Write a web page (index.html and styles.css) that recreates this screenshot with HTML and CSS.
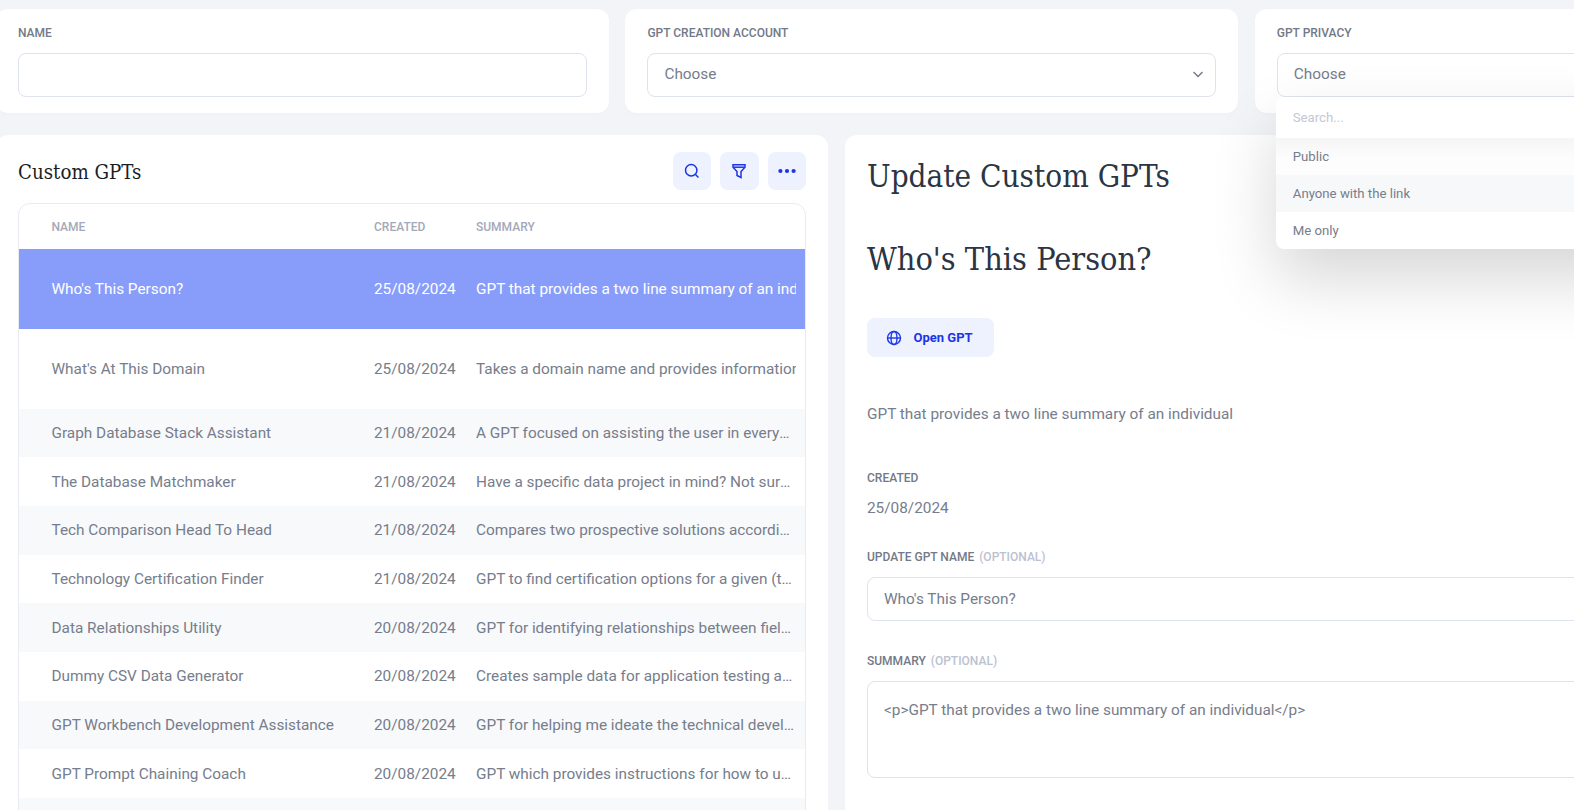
FILE: index.html
```html
<!DOCTYPE html>
<html>
<head>
  <title>Custom GPTs</title>
  <link rel="stylesheet" href="styles.css">
</head>
<body>
  <div class="page">
    <div class="top-row">
      <div class="card field-card">
        <label class="field-label">Name</label>
        <input class="text-input" type="text">
      </div>
      <div class="card field-card">
        <label class="field-label">GPT creation account</label>
        <div class="select-box">
          <span>Choose</span>
          <svg class="chevron" viewBox="0 0 12 12"><path d="M1.5 4l4.5 4.5L10.500 4"/></svg>
        </div>
      </div>
      <div class="card field-card field-card-open">
        <label class="field-label">GPT privacy</label>
        <div class="select-box select-open">
          <span>Choose</span>
          <div class="dropdown">
            <div class="dropdown-search">Search...</div>
            <div class="dropdown-item dropdown-item-first">Public</div>
            <div class="dropdown-item dropdown-item-hover">Anyone with the link</div>
            <div class="dropdown-item">Me only</div>
          </div>
        </div>
      </div>
    </div>

    <div class="main-row">
      <div class="card list-card">
        <div class="list-header">
          <h3 class="list-title">Custom GPTs</h3>
          <div class="list-actions">
            <button class="icon-button">
              <svg viewBox="0 0 16 16"><circle cx="7.200" cy="7.200" r="5.700"/><path d="M11.500 11.500l3 3"/></svg>
            </button>
            <button class="icon-button">
              <svg viewBox="0 0 16 16"><path d="M2 1.800h12v2.400l-4 4.300v6l-4-2V8.500L2 4.200z"/><path d="M2.500 4.200h11"/></svg>
            </button>
            <button class="icon-button">
              <svg viewBox="0 0 16 16"><circle class="dot" cx="1.400" cy="8" r="2.100"/><circle class="dot" cx="8" cy="8" r="2.100"/><circle class="dot" cx="14.600" cy="8" r="2.100"/></svg>
            </button>
          </div>
        </div>
        <div class="table-wrap">
          <table class="gpt-table">
            <thead>
              <tr>
                <th class="col-name">Name</th>
                <th class="col-created">Created</th>
                <th class="col-summary">Summary</th>
              </tr>
            </thead>
            <tbody>
              <tr class="row-selected row-tall">
                <td class="col-name">Who's This Person?</td>
                <td class="col-created">25/08/2024</td>
                <td class="col-summary"><div class="clip">GPT that provides a two line summary of an individual</div></td>
              </tr>
              <tr class="row-tall">
                <td class="col-name">What's At This Domain</td>
                <td class="col-created">25/08/2024</td>
                <td class="col-summary"><div class="clip">Takes a domain name and provides information about it</div></td>
              </tr>
              <tr class="row-striped">
                <td class="col-name">Graph Database Stack Assistant</td>
                <td class="col-created">21/08/2024</td>
                <td class="col-summary"><div class="ellipsis">A GPT focused on assisting the user in everyday graph database work</div></td>
              </tr>
              <tr>
                <td class="col-name">The Database Matchmaker</td>
                <td class="col-created">21/08/2024</td>
                <td class="col-summary"><div class="ellipsis">Have a specific data project in mind? Not sure which database to use</div></td>
              </tr>
              <tr class="row-striped">
                <td class="col-name">Tech Comparison Head To Head</td>
                <td class="col-created">21/08/2024</td>
                <td class="col-summary"><div class="ellipsis">Compares two prospective solutions according to your requirements</div></td>
              </tr>
              <tr>
                <td class="col-name">Technology Certification Finder</td>
                <td class="col-created">21/08/2024</td>
                <td class="col-summary"><div class="ellipsis">GPT to find certification options for a given (technology or skill)</div></td>
              </tr>
              <tr class="row-striped">
                <td class="col-name">Data Relationships Utility</td>
                <td class="col-created">20/08/2024</td>
                <td class="col-summary"><div class="ellipsis">GPT for identifying relationships between fields in a dataset</div></td>
              </tr>
              <tr>
                <td class="col-name">Dummy CSV Data Generator</td>
                <td class="col-created">20/08/2024</td>
                <td class="col-summary"><div class="ellipsis">Creates sample data for application testing and development work</div></td>
              </tr>
              <tr class="row-striped">
                <td class="col-name">GPT Workbench Development Assistance</td>
                <td class="col-created">20/08/2024</td>
                <td class="col-summary"><div class="ellipsis">GPT for helping me ideate the technical development of a workbench</div></td>
              </tr>
              <tr>
                <td class="col-name">GPT Prompt Chaining Coach</td>
                <td class="col-created">20/08/2024</td>
                <td class="col-summary"><div class="ellipsis">GPT which provides instructions for how to use prompt chaining</div></td>
              </tr>
              <tr class="row-striped">
                <td class="col-name"></td>
                <td class="col-created"></td>
                <td class="col-summary"></td>
              </tr>
            </tbody>
          </table>
        </div>
      </div>

      <div class="card detail-card">
        <h1 class="detail-title">Update Custom GPTs</h1>
        <h2 class="detail-name">Who's This Person?</h2>
        <button class="open-button">
          <svg viewBox="0 0 16 16"><circle cx="8" cy="8" r="6.500"/><ellipse cx="8" cy="8" rx="3" ry="6.500"/><path d="M1.500 8h13"/></svg>
          <span>Open GPT</span>
        </button>
        <p class="detail-summary">GPT that provides a two line summary of an individual</p>
        <label class="field-label created-label">Created</label>
        <div class="created-value">25/08/2024</div>
        <label class="field-label update-label">Update GPT name <span class="optional">(optional)</span></label>
        <input class="text-input" type="text" value="Who's This Person?">
        <label class="field-label summary-label">Summary <span class="optional">(optional)</span></label>
        <textarea class="text-area">&lt;p&gt;GPT that provides a two line summary of an individual&lt;/p&gt;</textarea>
      </div>
    </div>
  </div>
</body>
</html>
```

FILE: styles.css
```css
/* page is scrolled sideways in the screenshot, so it runs past both edges */
html, body {
  height: 810px;
  overflow: hidden;
}
body {
  margin: 0;
  background-color: #f3f4f8;
  font-family: Roboto, sans-serif;
  color: #767d8c;
}
.page {
  width: 1900px;
  margin-left: -4px;
  padding-top: 9px;
}
.top-row {
  display: grid;
  grid-template-columns: repeat(3, 613px);
  gap: 16.400px;
}
.main-row {
  display: grid;
  grid-template-columns: 832px 1000px;
  gap: 17px;
  margin-top: 22px;
}
.card {
  background-color: #fff;
  border-radius: 12px;
  box-shadow: 0 3px 4px rgba(0, 0, 0, 0.01);
}
.field-card {
  height: 104px;
  padding: 0 22px;
  box-sizing: border-box;
}
.field-card-open {
  position: relative;
  z-index: 2;
}
.field-label {
  display: block;
  font-size: 12px;
  font-weight: 500;
  line-height: 14px;
  text-transform: uppercase;
  color: #727987;
}
.field-card .field-label {
  padding-top: 17px;
  margin-bottom: 13px;
}
.text-input, .select-box, .text-area {
  display: block;
  width: 100%;
  box-sizing: border-box;
  border: 1px solid #dfe2ef;
  border-radius: 8px;
  background-color: #fff;
  font-family: Roboto, sans-serif;
  font-size: 15.350px;
  color: #767d8c;
  padding: 0 16px;
  outline: none;
}
.text-input {
  height: 44px;
}
.select-box {
  height: 44px;
  display: flex;
  align-items: center;
  justify-content: space-between;
  padding-bottom: 2px;
  position: relative;
}
.chevron {
  width: 12px;
  height: 12px;
  margin-right: -5px;
  fill: none;
  stroke: #6d7588;
  stroke-width: 1.300;
}
.dropdown {
  position: absolute;
  top: 43px;
  left: -2px;
  right: -1px;
  background-color: #fff;
  border-radius: 8px;
  box-shadow: 0 30px 65px rgba(0, 0, 0, 0.16);
  font-size: 13.200px;
}
.dropdown-search {
  height: 41px;
  line-height: 41px;
  padding: 0 17px;
  color: #c4c8d4;
}
.dropdown-item {
  height: 37px;
  line-height: 37px;
  padding: 0 17px;
  color: #767d8c;
}
.dropdown-item-first {
  background: linear-gradient(#f5f5f6, #fdfdfd 60%);
}
.dropdown-item-hover {
  background-color: #f7f8fa;
}
.list-card {
  height: 800px;
  padding: 0 22px;
  box-sizing: border-box;
}
.list-header {
  display: flex;
  align-items: center;
  justify-content: space-between;
  box-sizing: border-box;
  height: 68px;
  padding-top: 4px;
}
.list-title, .detail-title, .detail-name {
  margin: 0;
  font-family: "DejaVu Serif Condensed", "DejaVu Serif", serif;
  font-stretch: condensed;
  font-weight: 400;
}
.list-title {
  font-size: 20.300px;
  color: #1a1d26;
  padding-top: 2px;
}
.list-actions {
  display: flex;
  gap: 9px;
}
.icon-button {
  width: 38.500px;
  height: 38.500px;
  padding: 0;
  border: none;
  border-radius: 8px;
  background-color: #eef1fe;
  display: flex;
  align-items: center;
  justify-content: center;
}
.icon-button svg {
  width: 16px;
  height: 16px;
  overflow: visible;
  fill: none;
  stroke: #1b35e8;
  stroke-width: 1.500;
}
.icon-button .dot {
  fill: #1b35e8;
  stroke: none;
}
.table-wrap {
  border: 1px solid #e9ebf3;
  border-radius: 12px 12px 0 0;
  overflow: hidden;
}
.gpt-table {
  width: 100%;
  table-layout: fixed;
  border-collapse: collapse;
}
.gpt-table th {
  height: 45px;
  font-size: 12px;
  font-weight: 500;
  text-align: left;
  text-transform: uppercase;
  color: #a3a9b8;
}
.gpt-table td {
  height: 48.700px;
  padding: 0;
  font-size: 15.350px;
  white-space: nowrap;
}
.col-name {
  width: 322.500px;
  padding: 0 0 0 32.500px !important;
}
.col-created {
  width: 102px;
  padding: 0 !important;
}
.col-summary {
  padding: 0 9px 0 0 !important;
}
.ellipsis {
  overflow: hidden;
  text-overflow: ellipsis;
}
.clip {
  overflow: hidden;
}
.gpt-table .row-tall td {
  height: 79.800px;
}
.row-striped {
  background-color: #f8f9fb;
}
.row-selected {
  background-color: #889dfa;
  color: #fff;
}
.detail-card {
  height: 800px;
  padding: 0 22px;
  box-sizing: border-box;
}
.detail-title {
  font-size: 31.200px;
  line-height: 36px;
  color: #2b3544;
  padding-top: 23px;
}
.detail-name {
  font-size: 32.200px;
  line-height: 36px;
  color: #2b3544;
  margin-top: 47px;
}
.open-button {
  display: flex;
  align-items: center;
  gap: 12px;
  width: 127px;
  height: 39px;
  margin-top: 41px;
  padding: 0 0 0 18.500px;
  border: none;
  border-radius: 8px;
  background-color: #eef1fe;
  font-family: Roboto, sans-serif;
  font-size: 13px;
  font-weight: 700;
  color: #1b35e8;
}
.open-button svg {
  width: 16px;
  height: 16px;
  fill: none;
  stroke: #1b35e8;
  stroke-width: 1.400;
}
.detail-summary {
  margin: 47px 0 0;
  font-size: 15.350px;
  line-height: 20px;
}
.created-label {
  margin-top: 47px;
}
.created-value {
  margin-top: 13px;
  font-size: 15.350px;
  line-height: 20px;
}
.update-label {
  margin-top: 32px;
  margin-bottom: 13px;
}
.summary-label {
  margin-top: 33px;
  margin-bottom: 13px;
}
.optional {
  margin-left: 2px;
  color: #bcc1cf;
}
.text-area {
  height: 97px;
  padding-top: 18px;
  line-height: 20px;
  resize: none;
}
```
